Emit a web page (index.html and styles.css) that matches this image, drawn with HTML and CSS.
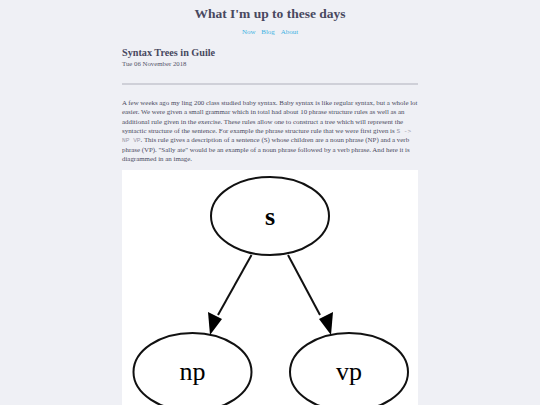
FILE: index.html
```html
<!DOCTYPE html>
<html>
<head>
<meta charset="utf-8">
<link rel="stylesheet" href="styles.css">
</head>
<body>
<header class="site-header">
  <h1 class="site-title">What I'm up to these days</h1>
  <nav class="site-nav">
    <a href="#">Now</a>
    <a href="#">Blog</a>
    <a href="#">About</a>
  </nav>
</header>
<main class="post">
  <h2 class="post-title">Syntax Trees in Guile</h2>
  <div class="post-date">Tue 06 November 2018</div>
  <hr class="rule">
  <p class="post-text">A few weeks ago my ling 200 class studied baby syntax. Baby syntax is like regular syntax, but a whole lot easier. We were given a small grammar which in total had about 10 phrase structure rules as well as an additional rule given in the exercise. These rules allow one to construct a tree which will represent the syntactic structure of the sentence. For example the phrase structure rule that we were first given is <code>S -&gt; NP VP</code>. This rule gives a description of a sentence (S) whose children are a noun phrase (NP) and a verb phrase (VP). "Sally ate" would be an example of a noun phrase followed by a verb phrase. And here it is diagrammed in an image.</p>
  <div class="figure">
    <svg class="tree" width="296" height="240" viewBox="0 0 296 240">
      <g fill="none" stroke="#111" stroke-width="2">
        <ellipse cx="148" cy="46" rx="59" ry="39"/>
        <ellipse cx="70.5" cy="202" rx="59" ry="39"/>
        <ellipse cx="227" cy="202" rx="59" ry="39"/>
      </g>
      <g stroke="#111" stroke-width="2">
        <line x1="129.5" y1="85" x2="96" y2="145"/>
        <line x1="166" y1="85" x2="198" y2="145"/>
      </g>
      <g fill="#000">
        <path d="M86,142 L100,149 L88,165 Z"/>
        <path d="M197,149 L211,142 L209,165 Z"/>
      </g>
      <g font-family="'Liberation Serif', serif" font-size="26" text-anchor="middle" fill="#000">
        <text x="148" y="55" font-weight="bold">s</text>
        <text x="70.5" y="210">np</text>
        <text x="227" y="210">vp</text>
      </g>
    </svg>
  </div>
</main>
</body>
</html>
```
FILE: styles.css
```css
html, body {
  margin: 0;
  padding: 0;
}
body {
  background: #eff0f5;
  font-family: "Liberation Serif", "Times New Roman", serif;
  color: #4f4f63;
}
.site-header {
  text-align: center;
  padding-top: 4px;
}
.site-title {
  margin: 0;
  font-size: 13.5px;
  line-height: 20px;
  font-weight: bold;
  color: #48485f;
}
.site-nav {
  margin-top: 4px;
  font-size: 7px;
  line-height: 9px;
}
.site-nav a {
  color: #3db3e3;
  text-decoration: none;
  margin: 0 2px;
}
.post {
  width: 296px;
  margin: 0 auto;
  padding-top: 10px;
}
.post-title {
  margin: 0;
  font-size: 10.2px;
  line-height: 12px;
  font-weight: bold;
  color: #48485f;
}
.post-date {
  font-size: 6.8px;
  line-height: 9px;
  color: #55556a;
}
.rule {
  margin: 15px 0 0 0;
  border: 0;
  height: 2px;
  background: #cfd0d8;
}
.post-text {
  margin: 13px 0 0 0;
  font-size: 6.9px;
  line-height: 9.35px;
  color: #4a4a60;
}
.post-text code {
  font-family: "Liberation Mono", monospace;
  font-size: 6.2px;
  line-height: 1;
  color: #9a9aaa;
}
.figure {
  margin-top: 7px;
  background: #fff;
  height: 240px;
}
.tree {
  display: block;
}
```
